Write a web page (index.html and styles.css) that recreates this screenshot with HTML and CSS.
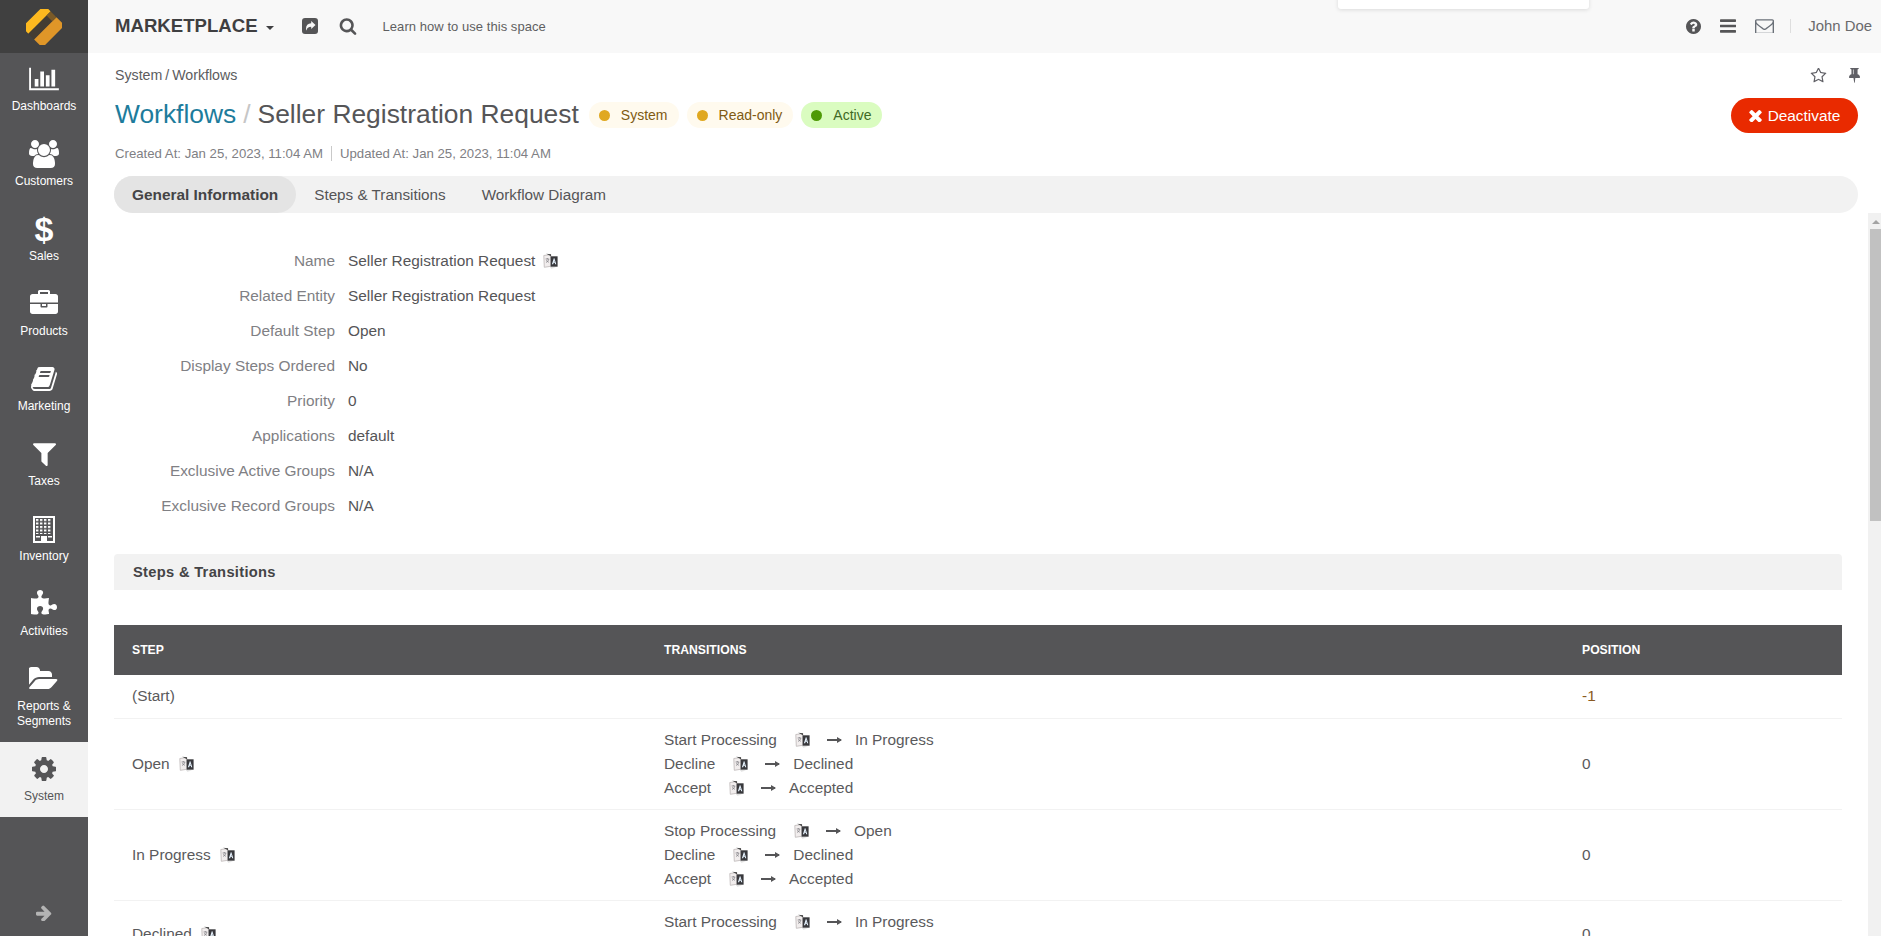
FILE: index.html
```html
<!DOCTYPE html>
<html lang="en">
<head>
<meta charset="utf-8">
<title>Seller Registration Request - Workflows</title>
<link rel="stylesheet" href="styles.css">
</head>
<body>
<svg class="defs" width="0" height="0" aria-hidden="true">
  <symbol id="tr" viewBox="0 0 16 16">
    <path d="M.8 2.500 7.800 1.500 8.300 13.200 1.300 14.300z" fill="#f1eded" stroke="#bdb6b6" stroke-width=".8"/>
    <path d="M2.600 6h3.600M4.300 5v1.200M3 9.400c1.500-.6 2.500-1.700 2.800-3.200M3.400 7.200c.5 1 1.300 1.700 2.500 2.100" fill="none" stroke="#77777d" stroke-width=".7"/>
    <path d="M6.500 13.500 8.300 15.700 13 14.500z" fill="#e0e0e0"/>
    <path d="M3.200 .7 8 3.200V1.200z" fill="#444"/>
    <path d="M7.600 3.300h7v10.400h-7z" fill="#38383c"/>
    <path d="M8.900 11.200 10.800 5.300h.6l1.900 5.900h-1.100l-.4-1.400h-1.200l-.4 1.400zm2-2.400h.6l-.3-1.300z" fill="#e8f4ff"/>
  </symbol>
</svg>
<aside class="sidebar">
  <div class="logo">
    <svg class="logo-mark" viewBox="0 0 40 40">
      <g transform="rotate(-45 20 20)">
        <path d="M5 3h30a2.500 2.500 0 0 1 2.500 2.500V13H2.500V5.500A2.500 2.500 0 0 1 5 3z" fill="#fdb91f"/>
        <rect x="2.500" y="13" width="35" height="9" fill="#433c33"/>
        <path d="M2.500 22h35v9.500A3 3 0 0 1 34.500 35h-29a3 3 0 0 1-3-3.500z" fill="#df9628"/>
        <path d="M31 13h6.500v9H31z" fill="#7a5a28"/>
      </g>
    </svg>
  </div>
  <nav class="nav">
    <a class="nav-item">
      <span class="nav-icon"><svg class="i-chart" viewBox="0 0 2048 1792"><path d="M640 896v512h-256v-512h256zm384-512v1024h-256v-1024h256zm1024 1152v128h-2048v-1536h128v1408h1920zm-640-896v768h-256v-768h256zm384-384v1152h-256v-1152h256z"/></svg></span>
      <span class="nav-label">Dashboards</span>
    </a>
    <a class="nav-item">
      <span class="nav-icon"><svg class="i-users" viewBox="0 0 1920 1792"><path d="M593 896q-162 5-265 128h-134q-82 0-138-40.500t-56-118.500q0-353 124-353 6 0 43.500 21t97.500 42.500 119 21.500q67 0 133-23-5 37-5 66 0 139 81 256zm1071 637q0 120-73 189.500t-194 69.500h-874q-121 0-194-69.500t-73-189.500q0-53 3.500-103.500t14-109 26.500-108.500 43-97.500 62-81 85.500-53.500 111.500-20q10 0 43 21.500t73 48 107 48 135 21.500 135-21.500 107-48 73-48 43-21.500q61 0 111.500 20t85.500 53.500 62 81 43 97.500 26.500 108.500 14 109 3.500 103.500zm-1024-1277q0 106-75 181t-181 75-181-75-75-181 75-181 181-75 181 75 75 181zm704 384q0 159-112.500 271.500t-271.500 112.500-271.500-112.500-112.500-271.500 112.500-271.500 271.500-112.500 271.500 112.500 112.500 271.500zm576 225q0 78-56 118.500t-138 40.500h-134q-103-123-265-128 81-117 81-256 0-29-5-66 66 23 133 23 59 0 119-21.500t97.500-42.500 43.500-21q124 0 124 353zm-128-609q0 106-75 181t-181 75-181-75-75-181 75-181 181-75 181 75 75 181z"/></svg></span>
      <span class="nav-label">Customers</span>
    </a>
    <a class="nav-item">
      <span class="nav-icon nav-glyph">$</span>
      <span class="nav-label">Sales</span>
    </a>
    <a class="nav-item">
      <span class="nav-icon"><svg class="i-case" viewBox="0 0 1792 1792"><path d="M640 256h512v-128h-512v128zm1152 640v480q0 66-47 113t-113 47h-1472q-66 0-113-47t-47-113v-480h672v160q0 26 19 45t45 19h320q26 0 45-19t19-45v-160h672zm-768 0v128h-256v-128h256zm768-480v384h-1792v-384q0-66 47-113t113-47h352v-160q0-40 28-68t68-28h576q40 0 68 28t28 68v160h352q66 0 113 47t47 113z"/></svg></span>
      <span class="nav-label">Products</span>
    </a>
    <a class="nav-item">
      <span class="nav-icon"><svg class="i-book" viewBox="0 0 1664 1792"><path d="M1639 478q40 57 18 129l-275 906q-19 64-76.500 107.500t-122.500 43.500h-923q-77 0-148.500-53.500t-99.500-131.500q-24-67-2-127 0-4 3-27t4-37q1-8-3-21.500t-3-19.500q2-11 8-21t16.500-23.500 16.500-23.500q23-38 45-91.500t30-91.500q3-10 .5-30t-.5-28q3-11 17-28t17-23q21-36 42-92t25-90q1-9-2.500-32t.5-28q4-13 22-30.500t22-22.500q19-26 42.500-84.500t27.500-96.500q1-8-3-25.500t-2-26.500q2-8 9-18t18-23 17-21q8-12 16.500-30.500t15-35 16-36 19.500-32 26.500-23.500 36-11.500 47.500 5.500l-1 3q38-9 51-9h761q74 0 114 56t18 130l-274 906q-36 119-71.500 153.500t-128.500 34.500h-869q-27 0-38 15-11 16-1 43 24 70 144 70h923q29 0 56-15.500t35-41.500l300-987q7-22 5-57 38 15 59 43zm-1064 2q-4 13 2 22.500t20 9.500h608q13 0 25.500-9.500t16.500-22.500l21-64q4-13-2-22.500t-20-9.500h-608q-13 0-25.500 9.500t-16.500 22.500zm-83 256q-4 13 2 22.500t20 9.500h608q13 0 25.500-9.500t16.500-22.500l21-64q4-13-2-22.500t-20-9.500h-608q-13 0-25.500 9.500t-16.500 22.500z"/></svg></span>
      <span class="nav-label">Marketing</span>
    </a>
    <a class="nav-item">
      <span class="nav-icon"><svg class="i-filter" viewBox="190 250 1410 1400"><path d="M1595 295q17 41-14 70l-493 493v742q0 42-39 59-13 5-25 5-27 0-45-19l-256-256q-19-19-19-45v-486l-493-493q-31-29-14-70 17-39 59-39h1280q42 0 59 39z"/></svg></span>
      <span class="nav-label">Taxes</span>
    </a>
    <a class="nav-item">
      <span class="nav-icon"><svg class="i-bldg" viewBox="0 0 22 27">
        <defs><pattern id="win" width="4" height="3.500" patternUnits="userSpaceOnUse" x="3" y="3"><rect width="2.400" height="2" fill="#fff"/></pattern></defs>
        <path fill-rule="evenodd" d="M0 0h22v27H0zM2 2v23h18V2z"/>
        <rect x="3" y="3" width="16" height="15" fill="url(#win)"/>
        <rect x="8" y="20" width="6" height="6"/>
        <rect x="3" y="20" width="4" height="1.500"/>
        <rect x="15" y="20" width="4" height="1.500"/>
      </svg></span>
      <span class="nav-label">Inventory</span>
    </a>
    <a class="nav-item">
      <span class="nav-icon"><svg class="i-puzzle" viewBox="0 0 1664 1792"><path d="M1664 1098q0 81-44.500 135t-123.500 54q-41 0-77.500-17.500t-59-38-56.500-38-71-17.500q-110 0-110 124 0 39 16 115t15 115v5q-22 0-33 1-34 3-97.500 11.500t-115.500 13.500-98 5q-61 0-103-26.500t-42-83.500q0-37 17.500-71t38-56.500 38-59 17.500-77.500q0-79-54-123.500t-135-44.500q-84 0-143 45.500t-59 127.500q0 43 15 83t33.500 64.500 33.500 53 15 50.500q0 45-46 89-37 35-117 35-95 0-245-24-9-2-27.500-4t-27.500-4l-13-2q-1 0-3-1-2 0-2-1v-1024q2 1 17.500 3.500t34 5 21.500 3.500q150 24 245 24 80 0 117-35 46-44 46-89 0-22-15-50.500t-33.500-53-33.500-64.500-15-83q0-82 59-127.500t144-45.500q80 0 134 44.500t54 123.500q0 41-17.500 77.500t-38 59-38 56.500-17.500 71q0 57 42 83.500t103 26.500q64 0 180-15t163-17v2q-1 2-3.500 17.500t-5 34-3.500 21.500q-24 150-24 245 0 80 35 117 44 46 89 46 22 0 50.500-15t53-33.500 64.500-33.500 83-15q82 0 127.500 59t45.500 143z"/></svg></span>
      <span class="nav-label">Activities</span>
    </a>
    <a class="nav-item nav-item-tall">
      <span class="nav-icon"><svg class="i-folder" viewBox="0 0 1920 1792"><path d="M1815 952q0 31-31 66l-336 396q-43 51-120.500 86.500t-143.500 35.500h-1088q-34 0-60.500-13t-26.500-43q0-31 31-66l336-396q43-51 120.500-86.500t143.500-35.500h1088q34 0 60.500 13t26.500 43zm-343-344v160h-832q-94 0-197 47.500t-164 119.500l-337 396-5 6q0-4-.5-12.500t-.5-12.500v-960q0-92 66-158t158-66h320q92 0 158 66t66 158v32h544q92 0 158 66t66 158z"/></svg></span>
      <span class="nav-label">Reports &amp;<br>Segments</span>
    </a>
    <a class="nav-item nav-item-active">
      <span class="nav-icon"><svg class="i-cog" viewBox="128 128 1536 1536"><path d="M1152 896q0-106-75-181t-181-75-181 75-75 181 75 181 181 75 181-75 75-181zm512-109v222q0 12-8 23t-20 13l-185 28q-19 54-39 91 35 50 107 138 10 12 10 25t-9 23q-27 37-99 108t-94 71q-12 0-26-9l-138-108q-44 23-91 38-16 136-29 186-7 28-36 28h-222q-14 0-24.500-8.500t-11.500-21.500l-28-184q-49-16-90-37l-141 107q-10 9-25 9-14 0-25-11-126-114-165-168-7-10-7-23 0-12 8-23 15-21 51-66.500t54-70.500q-27-50-41-99l-183-27q-13-2-21-12.500t-8-23.500v-222q0-12 8-23t19-13l186-28q14-46 39-92-40-57-107-138-10-12-10-24 0-10 9-23 26-36 98.500-107.500t94.500-71.500q13 0 26 10l138 107q44-23 91-38 16-136 29-186 7-28 36-28h222q14 0 24.500 8.500t11.500 21.500l28 184q49 16 90 37l142-107q9-9 24-9 13 0 25 10 129 119 165 170 7 8 7 22 0 12-8 23-15 21-51 66.500t-54 70.500q26 50 41 98l183 28q13 2 21 12.500t8 23.500z"/></svg></span>
      <span class="nav-label">System</span>
    </a>
  </nav>
  <div class="side-foot">
    <svg class="i-arrow" viewBox="128 128 1536 1536"><path d="M1600 960q0 54-37 91l-651 651q-39 37-91 37-51 0-90-37l-75-75q-38-38-38-91t38-91l293-293h-704q-52 0-84.500-37.500t-32.500-90.500v-128q0-53 32.500-90.500t84.500-37.500h704l-293-294q-38-36-38-90t38-90l75-75q38-38 90-38 53 0 91 38l651 651q37 35 37 90z"/></svg>
  </div>
</aside>
<div class="main">
  <header class="topbar">
    <div class="space">MARKETPLACE<span class="caret"></span></div>
    <svg class="t-share" viewBox="0 0 16 16"><rect width="16" height="16" rx="3" fill="#555557"/><path d="M9.200 3v2.300C5.800 5.500 4 7.500 4 11c0 .8.200 1.300.4 1.500.6-2.600 2-3.700 4.800-3.800V11L13.500 7z" fill="#f8f8f8"/></svg>
    <svg class="t-search" viewBox="0 0 1792 1792"><path d="M1216 832q0-185-131.500-316.500t-316.500-131.500-316.500 131.500-131.500 316.500 131.500 316.500 316.500 131.500 316.500-131.500 131.500-316.500zm512 832q0 52-38 90t-90 38q-54 0-90-38l-343-342q-179 124-399 124-143 0-273.500-55.500t-225-150-150-225-55.500-273.500 55.500-273.500 150-225 225-150 273.500-55.500 273.500 55.500 225 150 150 225 55.500 273.500q0 220-124 399l343 343q37 37 37 90z"/></svg>
    <span class="learn">Learn how to use this space</span>
    <div class="top-right">
      <svg class="t-help" viewBox="128 128 1536 1536"><path d="M1024 1376v-192q0-14-9-23t-23-9h-192q-14 0-23 9t-9 23v192q0 14 9 23t23 9h192q14 0 23-9t9-23zm256-672q0-88-55.500-163t-138.500-116-170-41q-243 0-371 213-15 24 8 42l132 100q7 6 19 6 16 0 25-12 53-68 86-92 34-24 86-24 48 0 85.500 26t37.500 59q0 38-20 61t-68 45q-63 28-115.500 86.500t-52.500 125.500v36q0 14 9 23t23 9h192q14 0 23-9t9-23q0-19 21.500-49.500t54.500-49.500q32-18 49-28.500t46-35 44.500-48 28-60.500 12.500-81zm384 192q0 209-103 385.500t-279.500 279.500-385.500 103-385.500-103-279.500-279.500-103-385.500 103-385.500 279.500-279.500 385.500-103 385.500 103 279.500 279.500 103 385.500z"/></svg>
      <svg class="t-bars" viewBox="128 256 1536 1280"><path d="M1664 1344v128q0 26-19 45t-45 19h-1408q-26 0-45-19t-19-45v-128q0-26 19-45t45-19h1408q26 0 45 19t19 45zm0-512v128q0 26-19 45t-45 19h-1408q-26 0-45-19t-19-45v-128q0-26 19-45t45-19h1408q26 0 45 19t19 45zm0-512v128q0 26-19 45t-45 19h-1408q-26 0-45-19t-19-45v-128q0-26 19-45t45-19h1408q26 0 45 19t19 45z"/></svg>
      <svg class="t-mail" viewBox="0 256 1792 1280"><path d="M1664 1504v-768q-32 36-69 66-268 206-426 338-51 43-83 67t-86.500 48.500-102.500 24.500h-2q-48 0-102.500-24.500t-86.500-48.500-83-67q-158-132-426-338-37-30-69-66v768q0 13 9.500 22.500t22.500 9.500h1472q13 0 22.500-9.500t9.500-22.500zm0-1051v-24.500l-.5-13-3-12.500-5.500-9-9-7.500-14-2.500h-1472q-13 0-22.500 9.500t-9.500 22.500q0 168 147 284 193 152 401 317 6 5 35 29.500t46 37.500 44.500 31.500 50.500 27.500 43 9h2q20 0 43-9t50.500-27.500 44.500-31.500 46-37.500 35-29.500q208-165 401-317 54-43 100.500-115.500t46.500-131.500zm128-37v1088q0 66-47 113t-113 47h-1472q-66 0-113-47t-47-113v-1088q0-66 47-113t113-47h1472q66 0 113 47t47 113z"/></svg>
      <span class="top-div"></span>
      <span class="user">John Doe</span>
    </div>
    <div class="popup"></div>
  </header>
  <section class="head">
    <div class="crumb-row">
      <div class="crumbs">System / Workflows</div>
      <div class="crumb-icons">
        <svg class="c-star" viewBox="0 128 1792 1536"><path d="M1201 1004l306-297-422-62-189-382-189 382-422 62 306 297-73 421 378-199 377 199zm527-357q0 22-26 48l-363 354 86 500q1 7 1 20 0 50-41 50-19 0-40-12l-449-236-449 236q-22 12-40 12-21 0-31.500-14.500t-10.500-35.500q0-6 2-20l86-500-364-354q-25-27-25-48 0-37 56-46l502-73 225-455q19-41 49-41t49 41l225 455 502 73q56 9 56 46z"/></svg>
        <svg class="c-pin" viewBox="0 256 1152 1536"><path d="M480 864v-448q0-14-9-23t-23-9-23 9-9 23v448q0 14 9 23t23 9 23-9 9-23zm672 352q0 26-19 45t-45 19h-429l-51 483q-2 12-10.500 20.500t-20.500 8.500h-1q-27 0-32-27l-76-485h-404q-26 0-45-19t-19-45q0-123 78.500-221.500t177.500-98.500v-512q-52 0-90-38t-38-90 38-90 90-38h640q52 0 90 38t38 90-38 90-90 38v512q99 0 177.500 98.500t78.500 221.500z"/></svg>
      </div>
    </div>
    <div class="title-row">
      <h1 class="title"><span class="title-link">Workflows</span><span class="title-sep">/</span>Seller Registration Request</h1>
      <span class="badge badge-warn"><i class="dot"></i>System</span>
      <span class="badge badge-warn"><i class="dot"></i>Read-only</span>
      <span class="badge badge-ok"><i class="dot"></i>Active</span>
      <button class="deact"><svg class="d-x" viewBox="280 280 1232 1232"><path d="M1490 1322q0 40-28 68l-136 136q-28 28-68 28t-68-28l-294-294-294 294q-28 28-68 28t-68-28l-136-136q-28-28-28-68t28-68l294-294-294-294q-28-28-28-68t28-68l136-136q28-28 68-28t68 28l294 294 294-294q28-28 68-28t68 28l136 136q28 28 28 68t-28 68l-294 294 294 294q28 28 28 68z"/></svg>Deactivate</button>
    </div>
    <div class="meta"><span>Created At: Jan 25, 2023, 11:04 AM</span><span class="meta-sep">Updated At: Jan 25, 2023, 11:04 AM</span></div>
    <div class="tabs">
      <span class="tab tab-active">General Information</span>
      <span class="tab">Steps &amp; Transitions</span>
      <span class="tab">Workflow Diagram</span>
    </div>
  </section>
  <section class="body">
    <dl class="info">
      <div class="info-row"><dt>Name</dt><dd>Seller Registration Request<svg class="tr tr-info"><use href="#tr"/></svg></dd></div>
      <div class="info-row"><dt>Related Entity</dt><dd>Seller Registration Request</dd></div>
      <div class="info-row"><dt>Default Step</dt><dd>Open</dd></div>
      <div class="info-row"><dt>Display Steps Ordered</dt><dd>No</dd></div>
      <div class="info-row"><dt>Priority</dt><dd>0</dd></div>
      <div class="info-row"><dt>Applications</dt><dd>default</dd></div>
      <div class="info-row"><dt>Exclusive Active Groups</dt><dd>N/A</dd></div>
      <div class="info-row"><dt>Exclusive Record Groups</dt><dd>N/A</dd></div>
    </dl>
    <h2 class="section">Steps &amp; Transitions</h2>
    <table class="grid">
      <thead>
        <tr><th class="c1">Step</th><th class="c2">Transitions</th><th class="c3">Position</th></tr>
      </thead>
      <tbody>
        <tr class="short"><td>(Start)</td><td></td><td class="neg">-1</td></tr>
        <tr>
          <td>Open<svg class="tr tr-step"><use href="#tr"/></svg></td>
          <td>
            <div class="tline">Start Processing<svg class="tr tr-line"><use href="#tr"/></svg><span class="arrow"></span>In Progress</div>
            <div class="tline">Decline<svg class="tr tr-line"><use href="#tr"/></svg><span class="arrow"></span>Declined</div>
            <div class="tline">Accept<svg class="tr tr-line"><use href="#tr"/></svg><span class="arrow"></span>Accepted</div>
          </td>
          <td>0</td>
        </tr>
        <tr>
          <td>In Progress<svg class="tr tr-step"><use href="#tr"/></svg></td>
          <td>
            <div class="tline">Stop Processing<svg class="tr tr-line"><use href="#tr"/></svg><span class="arrow"></span>Open</div>
            <div class="tline">Decline<svg class="tr tr-line"><use href="#tr"/></svg><span class="arrow"></span>Declined</div>
            <div class="tline">Accept<svg class="tr tr-line"><use href="#tr"/></svg><span class="arrow"></span>Accepted</div>
          </td>
          <td>0</td>
        </tr>
        <tr>
          <td>Declined<svg class="tr tr-step"><use href="#tr"/></svg></td>
          <td>
            <div class="tline">Start Processing<svg class="tr tr-line"><use href="#tr"/></svg><span class="arrow"></span>In Progress</div>
            <div class="tline">Accept<svg class="tr tr-line"><use href="#tr"/></svg><span class="arrow"></span>Accepted</div>
          </td>
          <td>0</td>
        </tr>
      </tbody>
    </table>
    <div class="scrollbar"><span class="sb-up"></span><span class="sb-thumb"></span></div>
  </section>
</div>
</body>
</html>
```
FILE: styles.css
```css
* { box-sizing: border-box; }
html, body { height: 100%; }
body {
  margin: 0;
  display: flex;
  height: 936px;
  overflow: hidden;
  background: #fff;
  color: #555557;
  font-family: "Liberation Sans", Arial, sans-serif;
  font-size: 15.400px;
}
.defs { position: absolute; }
svg { fill: currentColor; display: block; }

/* sidebar */
.sidebar {
  width: 88px;
  flex: none;
  display: flex;
  flex-direction: column;
  background: #555557;
  color: #fff;
}
.logo {
  height: 53px;
  background: #404040;
  display: flex;
  align-items: center;
  justify-content: center;
}
.logo-mark { width: 36px; height: 36px; }
.nav { display: flex; flex-direction: column; }
.nav-item {
  height: 75px;
  padding-top: 11px;
  display: flex;
  flex-direction: column;
  align-items: center;
}
.nav-item-tall { height: 89px; }
.nav-item-active { background: #f2f2f2; color: #555557; padding-top: 12px; }
.nav-icon {
  height: 30px;
  margin-bottom: 5px;
  display: flex;
  align-items: center;
  justify-content: center;
}
.nav-item-active .nav-icon { margin-bottom: 5px; }
.nav-glyph { font-size: 34px; font-weight: 700; line-height: 30px; }
.nav-label { font-size: 12px; line-height: 15px; text-align: center; }
.i-chart { width: 30px; height: 26px; }
.i-users { width: 30px; height: 28px; }
.i-case { width: 28px; height: 28px; }
.i-book { width: 26px; height: 28px; }
.i-filter { width: 23px; height: 23px; }
.i-bldg { width: 22px; height: 27px; }
.i-puzzle { width: 26px; height: 28px; }
.i-folder { width: 30px; height: 28px; }
.i-cog { width: 24px; height: 24px; }
.side-foot {
  margin-top: auto;
  height: 50px;
  display: flex;
  justify-content: center;
  color: #b4b4b4;
}
.i-arrow { width: 16px; height: 16px; margin-top: 19px; }

/* top bar */
.main { flex: 1; min-width: 0; display: flex; flex-direction: column; }
.topbar {
  height: 53px;
  flex: none;
  position: relative;
  display: flex;
  align-items: center;
  padding: 0 9px 1px 27px;
  background: #f8f8f8;
}
.space { font-size: 18.600px; font-weight: 700; color: #3f3f41; display: flex; align-items: center; }
.caret {
  margin-left: 8px;
  margin-top: 3px;
  border: 4.500px solid transparent;
  border-top-color: #3f3f41;
  border-bottom: 0;
}
.t-share { width: 16px; height: 16px; margin-left: 28px; }
.t-search { width: 18px; height: 18px; margin-left: 21px; color: #555557; }
.learn { margin-left: 26px; font-size: 13px; letter-spacing: .05px; color: #5f5f61; }
.top-right { margin-left: auto; display: flex; align-items: center; color: #555557; }
.t-help { width: 15px; height: 15px; }
.t-bars { width: 16px; height: 14px; margin-left: 19px; }
.t-mail { width: 19px; height: 14px; margin-left: 19px; color: #6a7078; }
.top-div { width: 1px; height: 14px; background: #dedede; margin-left: 16px; }
.user { margin-left: 17px; font-size: 14.900px; color: #6a6a6c; }
.popup {
  position: absolute;
  left: 1250px;
  top: -10px;
  width: 251px;
  height: 19px;
  background: #fff;
  border-radius: 3px;
  box-shadow: 0 1px 4px rgba(0, 0, 0, .12);
}

/* header */
.head { padding: 0 23px 0 27px; flex: none; }
.crumb-row {
  height: 43px;
  display: flex;
  align-items: center;
  justify-content: space-between;
  padding-top: 1px;
}
.crumbs { font-size: 14.200px; word-spacing: -1px; color: #5c5c5e; }
.crumb-icons { display: flex; align-items: center; color: #606066; margin-right: -2px; }
.c-star { width: 17px; height: 15px; }
.c-pin { width: 11px; height: 15px; margin-left: 22px; }
.title-row { height: 38px; display: flex; align-items: center; }
.title { margin: 0; padding-bottom: 2px; font-size: 26.400px; font-weight: 400; color: #555557; white-space: nowrap; }
.title-link { color: #1d7c9c; }
.title-sep { color: #c6c6c6; margin: 0 7px; }
.badge {
  height: 26px;
  display: inline-flex;
  align-items: center;
  padding: 0 11px 0 10px;
  border-radius: 13px;
  font-size: 14px;
  margin-left: 8px;
}
.title + .badge { margin-left: 10px; }
.badge-warn { background: #fffaee; color: #805a12; }
.badge-ok { background: #dafcc0; color: #3e6a25; }
.dot { width: 11px; height: 11px; border-radius: 50%; margin-right: 11px; background: #e0a820; }
.badge-ok .dot { background: #4e9a06; }
.deact {
  margin-left: auto;
  margin-top: 1px;
  height: 35px;
  width: 127px;
  border: 0;
  padding: 0;
  border-radius: 18px;
  background: #e92a00;
  color: #fff;
  font: 15.400px "Liberation Sans", Arial, sans-serif;
  display: flex;
  align-items: center;
  justify-content: center;
}
.d-x { width: 13px; height: 13px; margin-right: 6px; }
.meta { margin-top: 11px; height: 16px; display: flex; align-items: center; font-size: 13.200px; color: #808084; }
.meta-sep { margin-left: 8px; padding-left: 8px; border-left: 1px solid #c9c9c9; }
.tabs {
  margin: 15px 0 0 -1px;
  height: 37px;
  display: flex;
  background: #f2f2f2;
  border-radius: 18.500px;
}
.tab {
  padding: 0 18px;
  display: flex;
  align-items: center;
  font-size: 15.250px;
  color: #555557;
}
.tab-active { background: #e4e4e4; border-radius: 18.500px; font-size: 15.400px; font-weight: 700; color: #444446; }

/* body */
.body { position: relative; flex: 1; min-height: 0; overflow: hidden; padding: 30px 39px 0 26px; }
.info { margin: 0 0 31px; }
.info-row { height: 35px; display: flex; align-items: center; }
.info dt { width: 221px; text-align: right; color: #808084; }
.info dd { margin: 0 0 0 13px; display: flex; align-items: center; color: #555557; }
.tr { width: 16px; height: 16px; flex: none; }
.tr-info { margin-left: 8px; }
.tr-step { display: inline-block; vertical-align: -3px; margin-left: 9px; }
.tr-line { display: inline-block; vertical-align: -3px; margin: 0 16px 0 18px; }
.section {
  margin: 0 0 35px;
  height: 36px;
  padding-left: 19px;
  display: flex;
  align-items: center;
  background: #f2f2f2;
  border-radius: 4px 4px 0 0;
  font-size: 14.700px;
  font-weight: 700;
  letter-spacing: .3px;
  color: #444446;
}
.grid { width: 1728px; border-collapse: collapse; table-layout: fixed; }
.grid th {
  height: 50px;
  padding: 0 18px;
  background: #555557;
  color: #fff;
  text-align: left;
  font-size: 12.200px;
  text-transform: uppercase;
}
.c1 { width: 532px; }
.c2 { width: 918px; }
.c3 { width: 278px; }
.grid td { padding: 9px 18px; border-bottom: 1px solid #f2f2f2; vertical-align: middle; color: #5a5a5c; }
.short td { height: 43px; padding: 0 18px; }
.grid .neg { color: #8a5a22; }
.tline { height: 24px; display: flex; align-items: center; }
.arrow {
  width: 14px;
  height: 2px;
  background: #555557;
  position: relative;
  margin-right: 14px;
}
.arrow::after {
  content: "";
  position: absolute;
  right: -1px;
  top: -2px;
  border: 3px solid transparent;
  border-left: 5px solid #555557;
  border-right: 0;
}

/* scrollbar */
.scrollbar {
  position: absolute;
  right: 0;
  top: 0;
  bottom: 0;
  width: 13px;
  background: #f1f1f1;
  display: flex;
  flex-direction: column;
  align-items: flex-end;
}
.sb-up {
  align-self: center;
  margin: 7px 0 5px 2px;
  border: 4px solid transparent;
  border-bottom: 4px solid #a3a3a3;
  border-top: 0;
}
.sb-thumb { width: 11px; height: 292px; background: #c1c1c1; }
```
